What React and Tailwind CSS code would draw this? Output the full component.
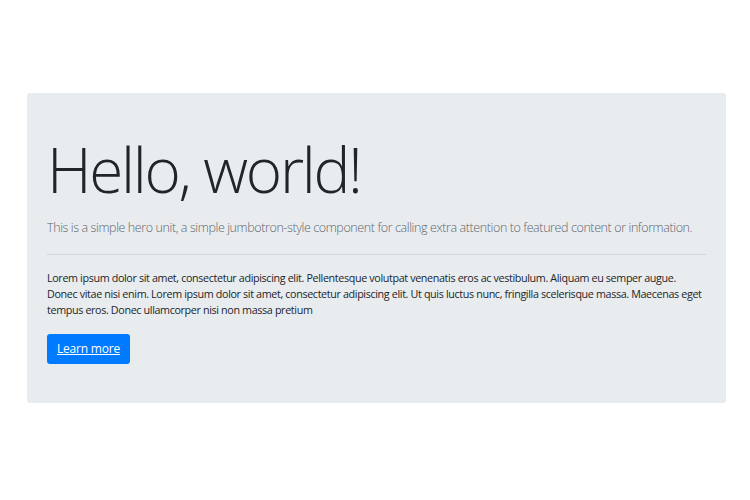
export default function App() {
  return (
    <div className="min-h-[500px] bg-white pt-[93px] font-['Open_Sans',sans-serif]">
      <div className="ml-[27px] w-[699px] h-[310px] rounded-[3px] bg-[#e9ecef] px-[20px] pt-[39px]">
        <h1 className="text-[62px] leading-[1.2] font-light text-[#212529] tracking-[-2.3px]">Hello, world!</h1>
        <p className="mt-[13px] text-[12.5px] leading-[18px] font-light text-[#5f666d] tracking-[-0.4px]">
          This is a simple hero unit, a simple jumbotron-style component for calling extra attention to featured content or information.
        </p>
        <hr className="mt-[17px] mb-[15px] border-0 border-t border-[#d3d6d9]" />
        <p className="text-[10.75px] leading-[16px] text-[#212529] tracking-[-0.36px]">
          Lorem ipsum dolor sit amet, consectetur adipiscing elit. Pellentesque volutpat venenatis eros ac vestibulum. Aliquam eu semper augue. Donec vitae nisi enim. Lorem ipsum dolor sit amet, consectetur adipiscing elit. Ut quis luctus nunc, fringilla scelerisque massa. Maecenas eget tempus eros. Donec ullamcorper nisi non massa pretium
        </p>
        <a href="#" className="mt-[16px] inline-flex h-[30px] w-[83px] items-center justify-center rounded-[3px] bg-[#007bff] text-[12px] text-white underline tracking-[-0.2px]">
          Learn more
        </a>
      </div>
    </div>
  );
}
